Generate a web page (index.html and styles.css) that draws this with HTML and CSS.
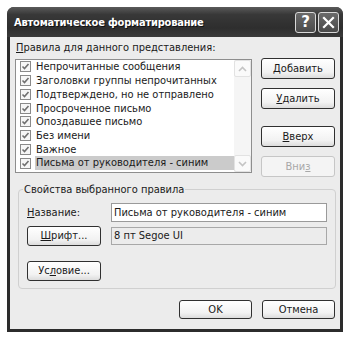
FILE: index.html
```html
<!DOCTYPE html>
<html lang="ru">
<head>
    <meta charset="UTF-8">
    <title>Автоматическое форматирование</title>
    <link rel="stylesheet" href="styles.css">
</head>
<body>
    <div class="window">
        <div class="titlebar">
            <span class="title">Автоматическое форматирование</span>
            <div class="caption-buttons">
                <span class="cap-btn">?</span>
                <span class="cap-btn">
                    <svg width="13" height="13" viewBox="0 0 13 13"><path d="M2 2 L11 11 M11 2 L2 11" stroke="#fff" stroke-width="2.2" stroke-linecap="square"/></svg>
                </span>
            </div>
        </div>
        <div class="client">
            <div class="rules-label"><u>П</u>равила для данного представления:</div>
            <div class="rules-row">
                <div class="listbox">
                    <ul class="items">
                        <li><span class="check"></span>Непрочитанные сообщения</li>
                        <li><span class="check"></span>Заголовки группы непрочитанных</li>
                        <li><span class="check"></span>Подтверждено, но не отправлено</li>
                        <li><span class="check"></span>Просроченное письмо</li>
                        <li><span class="check"></span>Опоздавшее письмо</li>
                        <li><span class="check"></span>Без имени</li>
                        <li><span class="check"></span>Важное</li>
                        <li class="selected"><span class="check"></span><span class="sel-text">Письма от руководителя - синим</span></li>
                    </ul>
                    <div class="scrollbar">
                        <span class="arrow up"><svg width="9" height="6" viewBox="0 0 9 6"><path d="M1 5 L4.5 1.5 L8 5" fill="none" stroke="#c4c4c4" stroke-width="1.6"/></svg></span>
                        <span class="track"></span>
                        <span class="arrow down"><svg width="9" height="6" viewBox="0 0 9 6"><path d="M1 1 L4.5 4.5 L8 1" fill="none" stroke="#c4c4c4" stroke-width="1.6"/></svg></span>
                    </div>
                </div>
                <div class="side-buttons">
                    <button class="btn"><u>Д</u>обавить</button>
                    <button class="btn gap-small"><u>У</u>далить</button>
                    <button class="btn gap-large"><u>В</u>верх</button>
                    <button class="btn gap-small" disabled>Вни<u>з</u></button>
                </div>
            </div>
            <div class="props">
                <span class="group-title">Свойства выбранного правила</span>
                <div class="prop-row first">
                    <span class="prop-label"><u>Н</u>азвание:</span>
                    <span class="field">Письма от руководителя - синим</span>
                </div>
                <div class="prop-row">
                    <button class="btn small"><u>Ш</u>рифт...</button>
                    <span class="field readonly">8 пт Segoe UI</span>
                </div>
                <div class="prop-row cond">
                    <button class="btn small">Ус<u>л</u>овие...</button>
                </div>
            </div>
            <div class="footer">
                <button class="btn ok">OK</button>
                <button class="btn ok">Отмена</button>
            </div>
        </div>
    </div>
</body>
</html>
```

FILE: styles.css
```css
body {
    margin: 0;
    background: #ffffff;
    font-family: 'DejaVu Sans Condensed', 'DejaVu Sans', sans-serif;
    font-stretch: condensed;
    font-size: 11px;
    color: #1a1a1a;
}
.window {
    margin: 7px 0 0 7px;
    width: 336px;
    height: 325px;
    background: #2c2c2c;
    border-radius: 7px 7px 0 0;
    display: flex;
    flex-direction: column;
    padding: 0 3px 3px 3px;
    box-sizing: border-box;
}
.titlebar {
    height: 30px;
    flex: none;
    display: flex;
    align-items: center;
    justify-content: space-between;
    padding-left: 4px;
    background: linear-gradient(#5a5a5a, #383838 25%, #2e2e2e 70%, #3a3a3a);
    margin: 0 -3px;
    padding-right: 4px;
    border-radius: 7px 7px 0 0;
}
.title {
    color: #ffffff;
    font-weight: bold;
    font-size: 11px;
    letter-spacing: -0.2px;
    padding-left: 3px;
    text-shadow: 1px 1px 0 #111;
}
.caption-buttons {
    display: flex;
    gap: 2px;
}
.cap-btn {
    width: 19px;
    height: 19px;
    border: 1px solid #d8d8d8;
    border-radius: 3px;
    background: linear-gradient(#6a6a6a, #4a4a4a);
    color: #fff;
    font-family: 'DejaVu Sans', sans-serif;
    font-stretch: normal;
    font-weight: bold;
    font-size: 15px;
    display: flex;
    align-items: center;
    justify-content: center;
    line-height: 1;
}
.client {
    flex: 1;
    background: #ececec;
    display: flex;
    flex-direction: column;
    padding: 0 5px 0 5px;
}
.rules-label {
    margin-top: 4px;
    height: 13px;
    line-height: 13px;
    padding-left: 1px;
}
.rules-row {
    display: flex;
    margin-top: 5px;
}
.listbox {
    width: 237px;
    height: 114px;
    box-sizing: border-box;
    border: 1px solid #8e8e8e;
    background: #ffffff;
    display: flex;
}
.items {
    list-style: none;
    margin: 0;
    padding: 0;
    flex: 1;
    min-width: 0;
}
.items li {
    height: 13.75px;
    display: flex;
    align-items: center;
    white-space: nowrap;
    overflow: hidden;
}
.check {
    width: 9px;
    height: 9px;
    border: 1px solid #8a8a8a;
    margin: 0 5px 0 4px;
    flex: none;
    background: #f6f6f6 url("data:image/svg+xml,%3Csvg xmlns='http://www.w3.org/2000/svg' width='9' height='9'%3E%3Cpath d='M1.5 4.5 L3.5 6.5 L7.5 2' fill='none' stroke='%23707070' stroke-width='1.6'/%3E%3C/svg%3E") no-repeat;
}
.selected .sel-text {
    background: #cbcbcb;
    flex: 1;
    padding-left: 1px;
    margin-left: -1px;
    line-height: 14px;
}
.scrollbar {
    width: 17px;
    flex: none;
    display: flex;
    flex-direction: column;
    background: #f5f5f5;
}
.arrow {
    height: 17px;
    box-sizing: border-box;
    border: 1px solid #e2e2e2;
    border-radius: 2px;
    background: #fafafa;
    display: flex;
    align-items: center;
    justify-content: center;
}
.track {
    flex: 1;
}
.side-buttons {
    display: flex;
    flex-direction: column;
    margin-left: 9px;
    margin-top: -1px;
}
.btn {
    font-family: inherit;
    font-stretch: condensed;
    font-size: 11px;
    color: #1a1a1a;
    width: 74px;
    height: 21px;
    padding: 0;
    border: 1px solid #303030;
    border-radius: 3px;
    background: linear-gradient(#ffffff, #f2f2f2 70%, #dcdcdc);
}
.btn:disabled {
    border-color: #c6c6c6;
    color: #a8a8a8;
    background: #f4f4f4;
}
.gap-small {
    margin-top: 9px;
}
.gap-large {
    margin-top: 17px;
}
.props {
    margin: 12px 0 0 3px;
    width: 318px;
    height: 100px;
    box-sizing: border-box;
    border: 1px solid #d0d0d0;
    border-radius: 4px;
    padding: 0 8px 0 8px;
    display: flex;
    flex-direction: column;
    align-items: flex-start;
}
.group-title {
    margin: -7px 0 0 -4px;
    padding: 0 1px;
    line-height: 13px;
    height: 13px;
    background: #ececec;
}
.prop-row {
    display: flex;
    align-items: center;
    height: 19px;
    width: 100%;
    margin-top: 4px;
}
.prop-row.first {
    margin-top: 7px;
}
.prop-row.cond {
    margin-top: 15px;
    height: 21px;
}
.prop-label {
    width: 81px;
}
.field {
    margin-left: auto;
    width: 216px;
    height: 19px;
    box-sizing: border-box;
    border: 1px solid #9a9a9a;
    background: #ffffff;
    display: flex;
    align-items: center;
    padding-left: 2px;
}
.field.readonly {
    background: #ececec;
    height: 18px;
    border-color: #a8a8a8;
}
.btn.small {
    width: 74px;
    height: 20px;
}
.footer {
    display: flex;
    justify-content: flex-end;
    gap: 10px;
    margin-top: 11px;
}
.btn.ok {
    width: 73px;
    height: 19px;
}
```
